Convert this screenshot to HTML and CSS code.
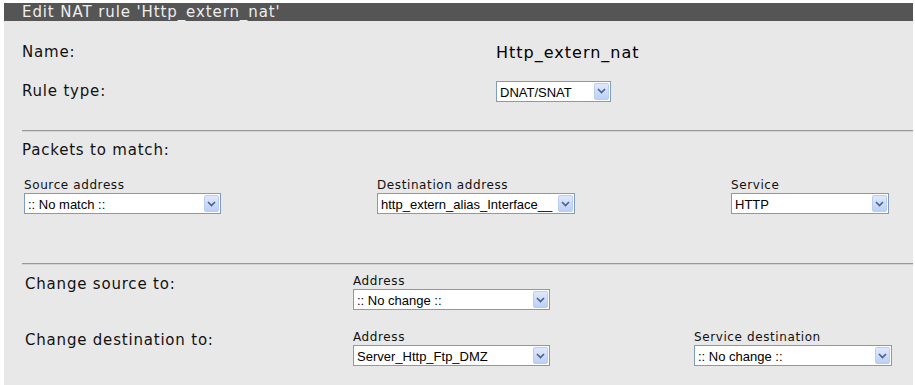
FILE: index.html
```html
<!DOCTYPE html>
<html lang="en">
<head>
    <meta charset="UTF-8">
    <title>Edit NAT rule</title>
    <link rel="stylesheet" href="styles.css">
</head>
<body>
    <div class="panel">
        <div class="panel-title">Edit NAT rule 'Http_extern_nat'</div>

        <!-- General -->
        <div class="general">
            <div class="row name-row">
                <span class="caption">Name:</span>
                <span class="name-value">Http_extern_nat</span>
            </div>
            <div class="row type-row">
                <span class="caption">Rule type:</span>
                <div class="select w-type">
                    <select><option>DNAT/SNAT</option></select>
                    <span class="arrow"><svg width="9" height="6" viewBox="0 0 9 6"><path d="M1 1l3.5 3.5L8 1" fill="none" stroke="#4d6185" stroke-width="1.6"/></svg></span>
                </div>
            </div>
        </div>

        <hr class="divider">

        <!-- Match -->
        <div class="caption packets">Packets to match:</div>
        <div class="match-fields">
            <div class="field">
                <label>Source address</label>
                <div class="select w-197">
                    <select><option>:: No match ::</option></select>
                    <span class="arrow"><svg width="9" height="6" viewBox="0 0 9 6"><path d="M1 1l3.5 3.5L8 1" fill="none" stroke="#4d6185" stroke-width="1.6"/></svg></span>
                </div>
            </div>
            <div class="field">
                <label>Destination address</label>
                <div class="select w-198">
                    <select><option>http_extern_alias_Interface__</option></select>
                    <span class="arrow"><svg width="9" height="6" viewBox="0 0 9 6"><path d="M1 1l3.5 3.5L8 1" fill="none" stroke="#4d6185" stroke-width="1.6"/></svg></span>
                </div>
            </div>
            <div class="field">
                <label>Service</label>
                <div class="select w-158">
                    <select><option>HTTP</option></select>
                    <span class="arrow"><svg width="9" height="6" viewBox="0 0 9 6"><path d="M1 1l3.5 3.5L8 1" fill="none" stroke="#4d6185" stroke-width="1.6"/></svg></span>
                </div>
            </div>
        </div>

        <hr class="divider divider-low">

        <!-- Translation -->
        <div class="change">
            <div class="change-row">
                <span class="caption">Change source to:</span>
                <div class="field">
                    <label>Address</label>
                    <div class="select w-197">
                        <select><option>:: No change ::</option></select>
                        <span class="arrow"><svg width="9" height="6" viewBox="0 0 9 6"><path d="M1 1l3.5 3.5L8 1" fill="none" stroke="#4d6185" stroke-width="1.6"/></svg></span>
                    </div>
                </div>
                <div></div>
            </div>
            <div class="change-row">
                <span class="caption">Change destination to:</span>
                <div class="field">
                    <label>Address</label>
                    <div class="select w-197">
                        <select><option>Server_Http_Ftp_DMZ</option></select>
                        <span class="arrow"><svg width="9" height="6" viewBox="0 0 9 6"><path d="M1 1l3.5 3.5L8 1" fill="none" stroke="#4d6185" stroke-width="1.6"/></svg></span>
                    </div>
                </div>
                <div class="field">
                    <label>Service destination</label>
                    <div class="select w-198">
                        <select><option>:: No change ::</option></select>
                        <span class="arrow"><svg width="9" height="6" viewBox="0 0 9 6"><path d="M1 1l3.5 3.5L8 1" fill="none" stroke="#4d6185" stroke-width="1.6"/></svg></span>
                    </div>
                </div>
            </div>
        </div>
    </div>
</body>
</html>
```

FILE: styles.css
```css
body {
    margin: 0;
    background: #fff;
    font-family: "DejaVu Sans", Verdana, sans-serif;
    color: #111;
}
.panel {
    margin: 3px 2px 0 4px;
    background: #e8e8e8;
    min-height: 400px;
}
.panel-title {
    background: #555;
    color: #eee;
    height: 18px;
    line-height: 18px;
    padding-left: 18px;
    font-size: 15px;
    letter-spacing: 0.9px;
}
.caption {
    font-size: 15px;
    line-height: 20px;
    letter-spacing: 0.8px;
    color: #111;
}
.general {
    padding: 16px 0 0 18px;
}
.row {
    display: grid;
    grid-template-columns: 474px auto;
    align-items: center;
}
.name-row {
    height: 30px;
}
.type-row {
    height: 24px;
    margin-top: 12px;
}
.name-value {
    font-size: 16px;
    letter-spacing: 1px;
    color: #000;
}
.divider {
    border: none;
    border-top: 1px solid #999;
    border-bottom: 1px solid #d4d4d4;
    margin: 27px 0 0 18px;
    height: 0;
}
.divider-low {
    margin-top: 49px;
}
.packets {
    margin: 8px 0 0 18px;
}
.match-fields {
    display: grid;
    grid-template-columns: 353px 354px auto;
    padding: 16px 0 0 20px;
}
.field label {
    display: block;
    font-size: 12px;
    line-height: 16px;
    padding-top: 1px;
    letter-spacing: 0.6px;
    color: #111;
}
.select {
    position: relative;
    height: 21px;
    box-sizing: border-box;
    border: 1px solid #7f9db9;
    background: #fff;
}
.select select {
    appearance: none;
    -webkit-appearance: none;
    width: 100%;
    height: 19px;
    border: none;
    background: transparent;
    padding: 0 0 0 3px;
    font-family: "Liberation Sans", Arial, sans-serif;
    font-size: 13px;
    color: #000;
    outline: none;
}
.arrow {
    position: absolute;
    top: 1px;
    right: 1px;
    width: 15px;
    height: 17px;
    box-sizing: border-box;
    border: 1px solid #b9cdf6;
    border-radius: 2px;
    background: linear-gradient(#dfe9fd, #bccff8);
    display: flex;
    align-items: center;
    justify-content: center;
}
.w-type { width: 115px; }
.w-197 { width: 197px; }
.w-198 { width: 198px; }
.w-158 { width: 158px; }
.change {
    padding: 7px 0 0 21px;
}
.change-row {
    display: grid;
    grid-template-columns: 328px 341px auto;
    align-items: start;
}
.change-row + .change-row {
    margin-top: 18px;
}
.change-row .caption {
    padding-top: 2px;
}
```
